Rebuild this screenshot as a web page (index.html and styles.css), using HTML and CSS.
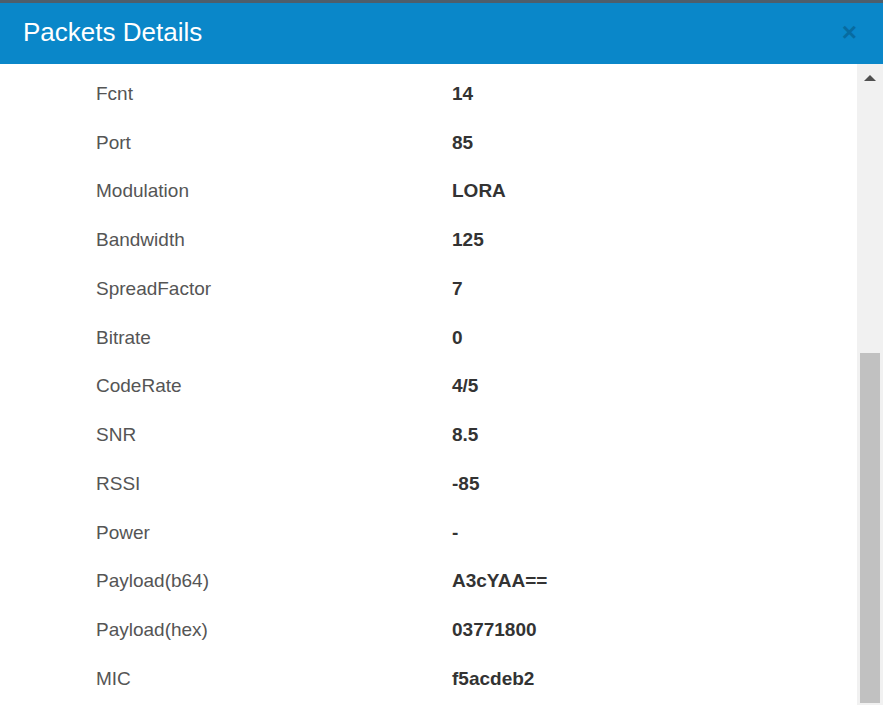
FILE: index.html
```html
<!DOCTYPE html>
<html>
<head>
<meta charset="utf-8">
<link rel="stylesheet" href="styles.css">
</head>
<body>
<div class="modal">
  <div class="topline"></div>
  <div class="header">
    <h1 class="title">Packets Details</h1>
    <span class="close">&times;</span>
  </div>
  <div class="body">
    <div class="content">
      <div class="row"><span class="label">Fcnt</span><span class="value">14</span></div>
      <div class="row"><span class="label">Port</span><span class="value">85</span></div>
      <div class="row"><span class="label">Modulation</span><span class="value">LORA</span></div>
      <div class="row"><span class="label">Bandwidth</span><span class="value">125</span></div>
      <div class="row"><span class="label">SpreadFactor</span><span class="value">7</span></div>
      <div class="row"><span class="label">Bitrate</span><span class="value">0</span></div>
      <div class="row"><span class="label">CodeRate</span><span class="value">4/5</span></div>
      <div class="row"><span class="label">SNR</span><span class="value">8.5</span></div>
      <div class="row"><span class="label">RSSI</span><span class="value">-85</span></div>
      <div class="row"><span class="label">Power</span><span class="value">-</span></div>
      <div class="row"><span class="label">Payload(b64)</span><span class="value">A3cYAA==</span></div>
      <div class="row"><span class="label">Payload(hex)</span><span class="value">03771800</span></div>
      <div class="row"><span class="label">MIC</span><span class="value">f5acdeb2</span></div>
    </div>
    <div class="scrollbar">
      <div class="arrow-up"></div>
      <div class="thumb"></div>
    </div>
  </div>
</div>
</body>
</html>
```
FILE: styles.css
```css
html, body {
  margin: 0;
  padding: 0;
  background: #ffffff;
}
body {
  width: 889px;
  height: 720px;
  overflow: hidden;
  font-family: "Liberation Sans", Arial, sans-serif;
}
.modal {
  width: 883px;
  height: 720px;
  display: flex;
  flex-direction: column;
}
.topline {
  height: 3px;
  background: #4e5e6b;
  flex: none;
}
.header {
  height: 61px;
  flex: none;
  background: #0a87c9;
  display: flex;
  align-items: flex-start;
  justify-content: space-between;
  padding: 0 26px 0 23px;
  box-sizing: border-box;
}
.title {
  margin: 0;
  padding-top: 14px;
  font-size: 26px;
  line-height: 30px;
  font-weight: normal;
  color: #ffffff;
}
.close {
  padding-top: 14px;
  font-size: 26px;
  line-height: 30px;
  font-weight: bold;
  color: #000000;
  opacity: 0.2;
}
.body {
  flex: 1;
  display: flex;
  min-height: 0;
}
.content {
  flex: 1;
  padding-top: 5.5px;
}
.row {
  height: 48.75px;
  display: flex;
  align-items: center;
  font-size: 19px;
}
.label {
  width: 356px;
  padding-left: 96px;
  color: #555555;
}
.value {
  color: #333333;
  font-weight: bold;
}
.scrollbar {
  width: 26px;
  height: 641px;
  background: #f1f1f1;
  display: flex;
  flex-direction: column;
  align-items: center;
  box-sizing: border-box;
  padding-top: 11px;
}
.arrow-up {
  width: 0;
  height: 0;
  border-left: 6px solid transparent;
  border-right: 6px solid transparent;
  border-bottom: 6px solid #505050;
}
.thumb {
  margin-top: 272px;
  width: 20px;
  height: 350px;
  background: #c1c1c1;
}
```
